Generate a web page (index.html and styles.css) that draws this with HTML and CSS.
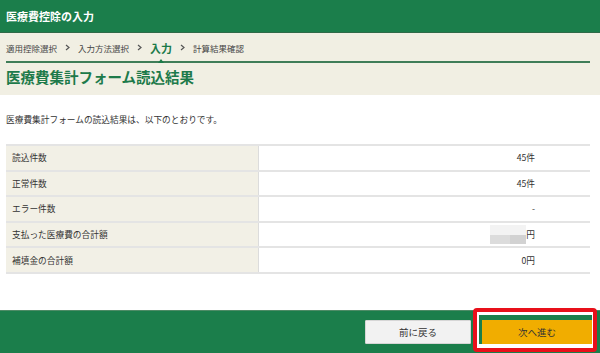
FILE: index.html
```html
<!DOCTYPE html>
<html lang="ja">
<head>
<meta charset="utf-8">
<title>医療費控除の入力</title>
<link rel="stylesheet" href="styles.css">
</head>
<body>
<header class="topbar">医療費控除の入力</header>
<section class="head-area">
  <nav class="steps">
    <span class="step">適用控除選択</span>
    <svg class="sep" width="5" height="7" viewBox="0 0 5 7"><polyline points="1,1 4,3.5 1,6" fill="none" stroke="#555" stroke-width="1.2"/></svg>
    <span class="step">入力方法選択</span>
    <svg class="sep" width="5" height="7" viewBox="0 0 5 7"><polyline points="1,1 4,3.5 1,6" fill="none" stroke="#555" stroke-width="1.2"/></svg>
    <span class="step step-active">入力</span>
    <svg class="sep" width="5" height="7" viewBox="0 0 5 7"><polyline points="1,1 4,3.5 1,6" fill="none" stroke="#555" stroke-width="1.2"/></svg>
    <span class="step">計算結果確認</span>
  </nav>
  <h1 class="title">医療費集計フォーム読込結果</h1>
</section>
<main class="content">
  <p class="desc">医療費集計フォームの読込結果は、以下のとおりです。</p>
  <div class="result">
    <div class="row"><div class="label">読込件数</div><div class="value">45件</div></div>
    <div class="row"><div class="label">正常件数</div><div class="value">45件</div></div>
    <div class="row"><div class="label">エラー件数</div><div class="value">-</div></div>
    <div class="row"><div class="label">支払った医療費の合計額</div><div class="value"><span class="masked"></span>円</div></div>
    <div class="row"><div class="label">補填金の合計額</div><div class="value">0円</div></div>
  </div>
</main>
<footer class="actions">
  <button class="btn btn-back">前に戻る</button>
  <div class="highlight">
    <div class="slot"><button class="btn btn-next">次へ進む</button></div>
  </div>
</footer>
</body>
</html>
```

FILE: styles.css
```css
* { box-sizing: border-box; }
html, body { margin: 0; padding: 0; }
body {
  width: 600px;
  height: 353px;
  overflow: hidden;
  background: #ffffff;
  font-family: "Noto Sans CJK JP", "Noto Sans", sans-serif;
  color: #333333;
}
.topbar {
  height: 33px;
  padding-left: 6px;
  background: #1b7e4b;
  border-bottom: 1px solid #2f6a48;
  color: #ffffff;
  font-size: 11px;
  font-weight: 700;
  line-height: 32px;
}
.head-area {
  background: #f1efe3;
  padding: 0 10px 0 6px;
  height: 62px;
}
.steps {
  height: 30px;
  display: flex;
  align-items: center;
  gap: 8px;
  border-bottom: 2px solid #3f7d58;
  font-size: 8.5px;
  color: #444444;
  padding-top: 1px;
}
.step { line-height: 12px; }
.step-active {
  position: relative;
  font-size: 11px;
  font-weight: 700;
  color: #1b7a48;
}
.step-active::after {
  content: "";
  position: absolute;
  left: 50%;
  bottom: -9px;
  margin-left: -3px;
  border-left: 3px solid transparent;
  border-right: 3px solid transparent;
  border-bottom: 4px solid #1b7a48;
}
.sep { display: block; }
.title {
  margin: 0;
  font-size: 14.5px;
  font-weight: 700;
  color: #1d7a4a;
  line-height: 26px;
  padding-top: 1px;
}
.content {
  padding: 0 10px 0 6px;
}
.desc {
  margin: 18px 0 17px;
  font-size: 8.7px;
  line-height: 14px;
  color: #333333;
}
.result {
  border-top: 2px solid #e4e4e4;
}
.row {
  display: grid;
  grid-template-columns: 253px 1fr;
  height: 25.6px;
  border-bottom: 2px solid #e4e4e4;
  font-size: 8.7px;
}
.label {
  background: #f2f0e6;
  border-right: 1px solid #dcdcdc;
  padding-left: 6px;
  display: flex;
  align-items: center;
}
.value {
  display: flex;
  align-items: center;
  justify-content: flex-end;
  padding-right: 55px;
}
.masked {
  display: inline-block;
  width: 36px;
  height: 19px;
  background:
    linear-gradient(to right, #dcdcdc 0 20px, #d2d2d2 20px 36px) bottom / 36px 9px no-repeat,
    #f3f3f3;
}
.actions {
  margin-top: 36px;
  height: 43px;
  background: #1b7e4b;
  border-top: 1px solid #4e8b66;
  display: flex;
  justify-content: flex-end;
  align-items: flex-end;
  padding: 0 3px 1px 0;
  gap: 2px;
}
.btn {
  font-family: inherit;
  font-size: 9.5px;
  color: #333333;
  cursor: pointer;
  margin: 0;
  padding: 0;
}
.btn-back {
  width: 106px;
  height: 24px;
  margin-bottom: 8px;
  background: #f2f2f2;
  border: 1px solid #d6d6d6;
  border-radius: 1px;
}
.highlight {
  border: 4px solid #e8101a;
  border-radius: 4px;
  background: #ffffff;
  padding: 3px 1px 4px 2px;
}
.slot {
  background: #1b7e4b;
  padding: 5px 0 0 3px;
}
.btn-next {
  display: block;
  width: 110px;
  height: 24px;
  background: #f1ad00;
  border: none;
}
```
